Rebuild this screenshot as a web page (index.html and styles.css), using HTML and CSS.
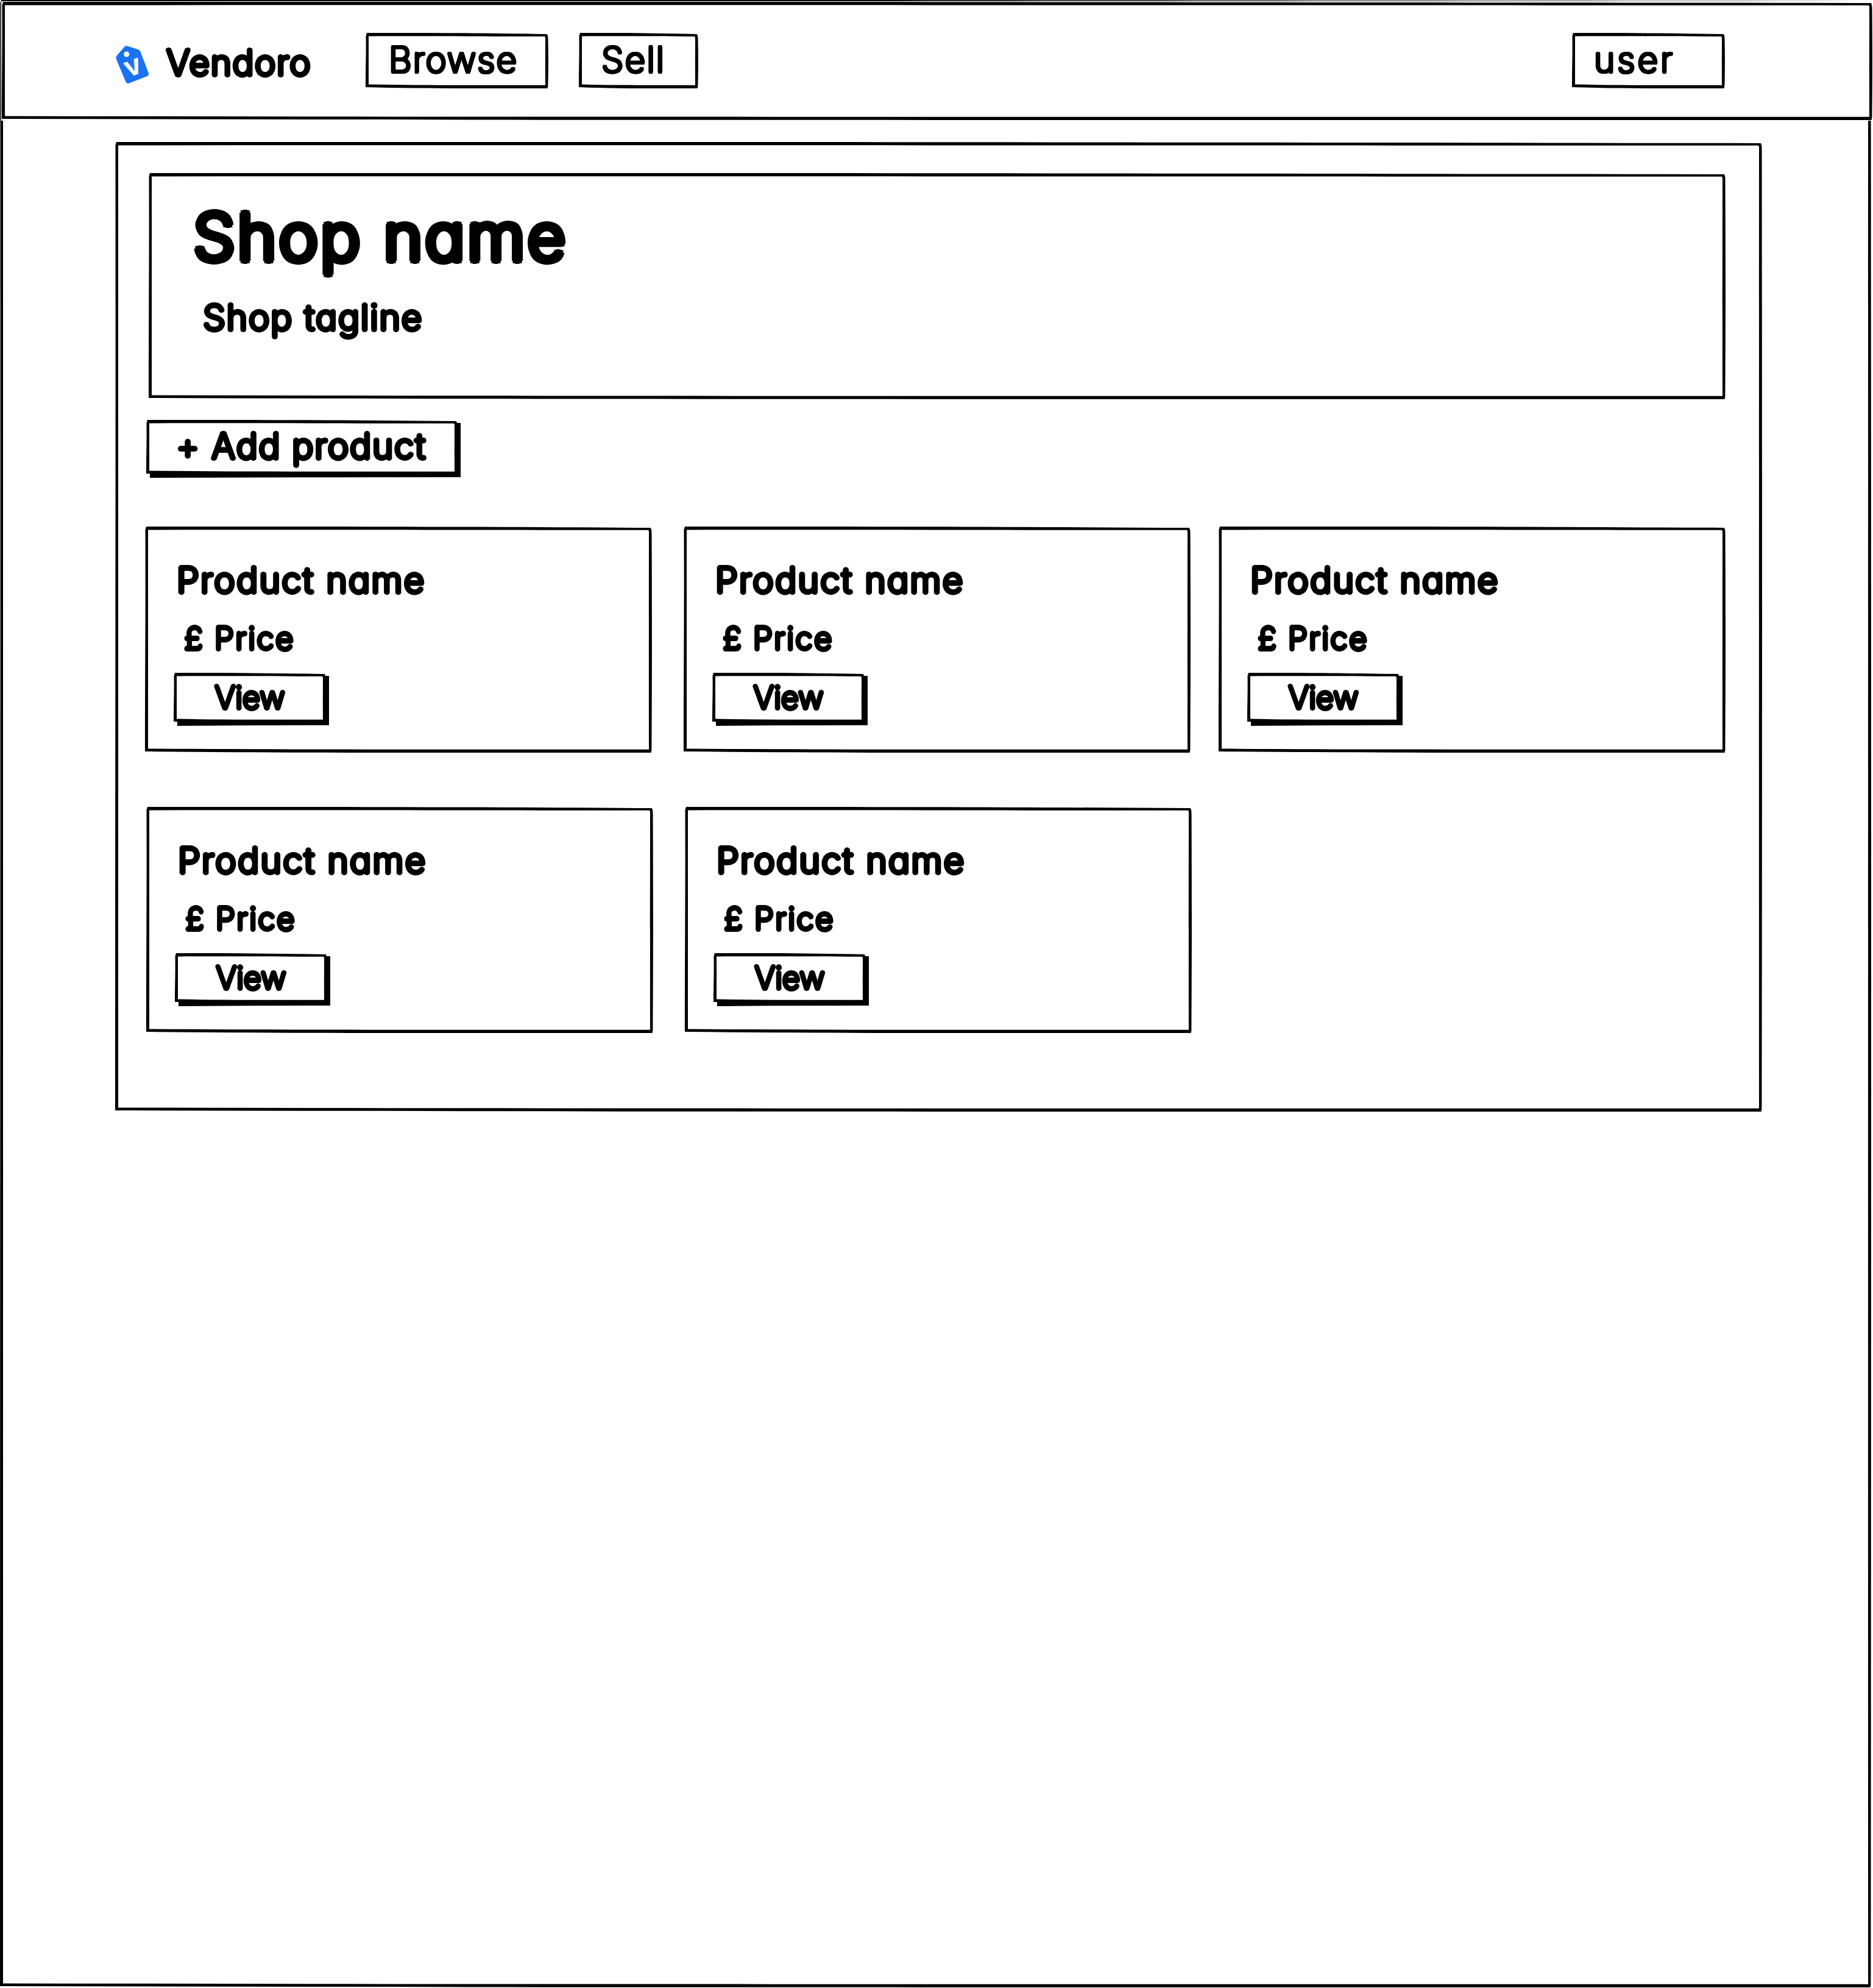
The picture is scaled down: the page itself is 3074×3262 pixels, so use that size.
FILE: index.html
```html
<!DOCTYPE html>
<html lang="en">
<head>
<meta charset="utf-8">
<title>Vendoro</title>
<link rel="stylesheet" href="styles.css">
</head>
<body>
<div class="page sketch">
  <header class="topbar sketch">
    <a class="brand">
      <svg class="brand-tag" viewBox="92 137 164 188"><path fill="#1a73f5" d="M135 142Q142 136 151 139L203 156Q210 159 213 166L253 270Q257 282 247 287L156 322Q146 326 141 315L94 202Q91 193 97 186Z"/><circle cx="145" cy="179" r="13.500" fill="#fff"/><text class="brand-letter" x="191" y="280" transform="rotate(-21 191 280)">v</text></svg>
      <span class="ink t-brand">Vendoro</span>
    </a>
    <nav class="nav">
      <a class="nav-item sketch browse"><span class="ink thin t-browse">Browse</span></a>
      <a class="nav-item sketch sell"><span class="ink thin t-sell">Sell</span></a>
    </nav>
    <a class="nav-item sketch user"><span class="ink thin t-user">user</span></a>
  </header>
  <main class="shop sketch">
    <section class="banner sketch">
      <h1 class="ink t-shop">Shop name</h1>
      <p class="ink t-tagline">Shop tagline</p>
    </section>
    <button class="btn add sketch raised"><span class="ink t-add">+ Add product</span></button>
    <div class="row">
      <article class="card sketch"><h2 class="ink t-name">Product name</h2><p class="ink t-price">£ Price</p><button class="btn view sketch raised"><span class="ink t-view">View</span></button></article>
      <article class="card sketch"><h2 class="ink t-name">Product name</h2><p class="ink t-price">£ Price</p><button class="btn view sketch raised"><span class="ink t-view">View</span></button></article>
      <article class="card sketch"><h2 class="ink t-name">Product name</h2><p class="ink t-price">£ Price</p><button class="btn view sketch raised"><span class="ink t-view">View</span></button></article>
    </div>
    <div class="row second">
      <article class="card sketch"><h2 class="ink t-name">Product name</h2><p class="ink t-price">£ Price</p><button class="btn view sketch raised"><span class="ink t-view">View</span></button></article>
      <article class="card sketch"><h2 class="ink t-name">Product name</h2><p class="ink t-price">£ Price</p><button class="btn view sketch raised"><span class="ink t-view">View</span></button></article>
    </div>
  </main>
</div>
<script src="sketch.js"></script>
</body>
</html>
```
FILE: styles.css
```css
* { box-sizing: border-box; margin: 0; padding: 0; }

body {
  background: #fff;
  color: #000;
  font-family: Inter, "Noto Sans", sans-serif;
  font-feature-settings: "cv11" 1;
}

.page {
  display: flow-root;
  width: 3071px;
  height: 3261px;
}

/* Hand-drawn frame, painted by sketch.js behind the content */
.sketch { position: relative; }
.sketch-frame {
  position: absolute;
  inset: 0;
  width: 100%;
  height: 100%;
  overflow: visible;
  pointer-events: none;
}

/* Marker-pen lettering: the shadows thicken and round each stroke */
.ink {
  --r: 0.05em;
  --d: calc(var(--r) * 0.707);
  display: block;
  font-weight: 300;
  white-space: nowrap;
  text-shadow:
    var(--r) 0 0 #000, calc(var(--r) * -1) 0 0 #000,
    0 var(--r) 0 #000, 0 calc(var(--r) * -1) 0 #000,
    var(--d) var(--d) 0 #000, calc(var(--d) * -1) var(--d) 0 #000,
    var(--d) calc(var(--d) * -1) 0 #000, calc(var(--d) * -1) calc(var(--d) * -1) 0 #000;
}
.ink.thin { --r: 0.042em; font-weight: 200; }

.topbar {
  display: flex;
  align-items: flex-start;
  width: 3070px;
  height: 194px;
  margin: 3px 0 0 3px;
  padding: 51px 242px 0 187px;
  background: #fff;
  box-shadow: 0 0 0 1px #fff;
}
.brand { display: flex; width: 410px; padding-top: 21px; }
.brand-tag { width: 54.7px; height: 62.7px; margin-right: 28px; }
.brand-letter { fill: #fff; font-size: 138px; font-weight: 650; text-anchor: middle; }
.t-brand { margin-top: -2px; font-size: 58.5px; line-height: 60px; letter-spacing: 1.3px; }

.nav { display: flex; gap: 50px; }
.nav-item { height: 91px; padding-top: 14px; font-size: 58.5px; line-height: 60px; }
.browse { width: 300px; padding-left: 38px; letter-spacing: 1.9px; }
.sell { width: 196px; padding-left: 37px; letter-spacing: 2.2px; }
.user { width: 251px; margin-left: auto; padding-left: 36px; letter-spacing: 3.8px; }

.shop {
  width: 2703px;
  height: 1591px;
  margin: 36px 0 0 189px;
  padding: 51px 0 0 49px;
}
.banner { width: 2588px; height: 371px; margin-left: 6px; padding: 43px 0 0 73px; }
.t-shop { font-size: 109px; line-height: 122px; letter-spacing: 3.7px; }
.t-tagline { margin: 42px 0 0 16px; font-size: 58.5px; line-height: 60px; letter-spacing: 1.7px; }

.btn { display: block; border: 0; background: none; font: inherit; font-feature-settings: inherit; text-align: left; }
.add { width: 511px; height: 90px; margin: 34px 0 0 2px; padding: 0 0 4px 49px; font-size: 58.5px; line-height: 60px; letter-spacing: 1.6px; }

.row { display: flex; gap: 51px; margin-top: 85px; }
.row.second { margin: 89px 0 0 2px; }
.card { width: 832px; height: 371px; padding: 58px 0 0 52px; }
.card:nth-child(2) { margin-left: 1px; }
.card:nth-child(3) { margin-left: -5px; }
.t-name { font-size: 58.5px; line-height: 60px; letter-spacing: 2.2px; }
.t-price { margin: 39px 0 0 12px; font-size: 51.5px; line-height: 53px; letter-spacing: 2px; }
.view { width: 250px; height: 82px; margin: 30px 0 0 -5px; padding: 0 0 2px 67px; font-size: 51.5px; line-height: 53px; letter-spacing: -0.6px; }
```
FILE: sketch.js
```js
// Draws a slightly uneven pen frame round every .sketch element.
document.querySelectorAll('.sketch').forEach(function (el) {
  var ns = 'http://www.w3.org/2000/svg';
  var w = el.offsetWidth, h = el.offsetHeight;
  var svg = document.createElementNS(ns, 'svg');
  svg.setAttribute('class', 'sketch-frame');
  function add(d) {
    var p = document.createElementNS(ns, 'path');
    p.setAttribute('d', d);
    p.setAttribute('fill-rule', 'evenodd');
    svg.appendChild(p);
  }
  add(['M2 0 C', w * 0.3, -0.4, w * 0.6, 0.2, w - 2, 2,
    'Q', w - 0.5, 5, w - 0.5, 10, 'C', w + 0.2, h * 0.4, w, h * 0.7, w - 0.6, h - 4,
    'L', w - 1.5, h, 'C', w * 0.6, h, w * 0.3, h + 0.5, 0, h - 2,
    'C', 0, h * 0.6, 1, h * 0.4, 0.5, 5, 'Z',
    'M5 5.5 C', w * 0.3, 5, w * 0.6, 5.6, w - 6, 5.8, 'L', w - 5, 8,
    'C', w - 5, h * 0.4, w - 5.2, h * 0.6, w - 5, h - 5.3,
    'C', w * 0.6, h - 5, w * 0.3, h - 5, 5, h - 6.5, 'Z'].join(' '));
  if (el.classList.contains('raised')) {
    add(['M6', h - 5, 'L', w - 5, h - 5, 'L', w - 5, 5, 'L', w + 5, 5,
      'L', w + 5, h + 4, 'L', w / 2, h + 4.2, 'L6', h + 5, 'Z'].join(' '));
  }
  el.prepend(svg);
});
```
